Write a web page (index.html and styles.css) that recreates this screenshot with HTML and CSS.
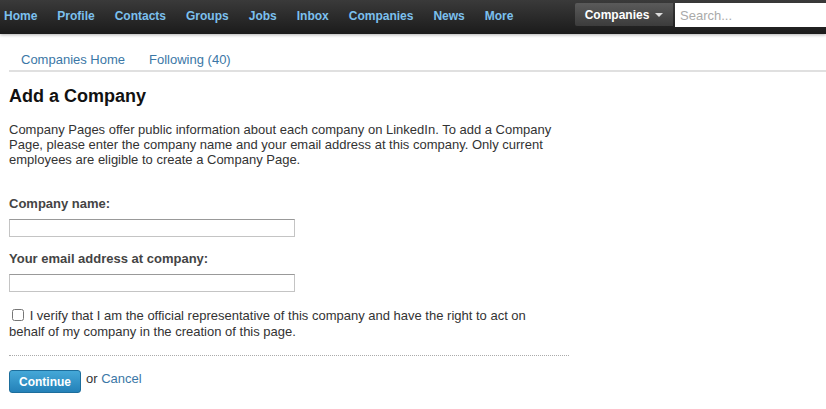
FILE: index.html
```html
<!DOCTYPE html>
<html lang="en">

<head>
    <meta charset="UTF-8">
    <meta name="viewport" content="width=device-width, initial-scale=1.0">
    <title>Add a Company</title>

    <link rel="stylesheet" href="styles.css">
</head>

<body>

    <div id="topbar">
        <div class="navLinks">
            <a href="#">Home</a>
            <a href="#">Profile</a>
            <a href="#">Contacts</a>
            <a href="#">Groups</a>
            <a href="#">Jobs</a>
            <a href="#">Inbox</a>
            <a href="#">Companies</a>
            <a href="#">News</a>
            <a href="#">More</a>
        </div>
        <div class="searchArea">
            <div class="searchType">Companies <span class="caret"></span></div>
            <input class="searchBox" type="text" placeholder="Search...">
        </div>
    </div>

    <div id="subnav">
        <a href="#">Companies Home</a>
        <a href="#">Following (40)</a>
    </div>

    <div id="content">
        <h1>Add a Company</h1>
        <p class="intro">Company Pages offer public information about each company on LinkedIn. To add a Company
            Page, please enter the company name and your email address at this company. Only current
            employees are eligible to create a Company Page.</p>

        <label class="fieldLabel" for="companyName">Company name:</label>
        <input class="field" id="companyName" type="text">

        <label class="fieldLabel second" for="companyEmail">Your email address at company:</label>
        <input class="field" id="companyEmail" type="text">

        <div class="verify">
            <input type="checkbox" id="verify"> <label for="verify">I verify that I am the official representative of this company and have the right to act on<br>
            behalf of my company in the creation of this page.</label>
        </div>

        <div class="actions">
            <button class="continueBtn">Continue</button>
            <span class="or">or <a href="#">Cancel</a></span>
        </div>
    </div>

</body>

</html>
```

FILE: styles.css
```css
body {
    margin: 0;
    font-family: "Liberation Sans", Arial, sans-serif;
    color: #333;
    background: #fff;
}

a {
    text-decoration: none;
}

/* barra superior */
#topbar {
    display: flex;
    justify-content: space-between;
    height: 34px;
    background: linear-gradient(#3a3a3a, #1b1b1b);
    box-shadow: 0 1px 3px rgba(0, 0, 0, 0.3);
}

.navLinks {
    display: flex;
    align-items: center;
    padding-bottom: 2px;
}

.navLinks a {
    padding: 0 10px;
    font-size: 12px;
    font-weight: bold;
    color: #7cc0ee;
}

.navLinks a:first-child {
    padding-left: 4px;
}

.searchArea {
    display: flex;
    align-items: flex-start;
    padding-top: 3px;
}

.searchType {
    display: flex;
    align-items: center;
    justify-content: center;
    gap: 6px;
    width: 98px;
    height: 23px;
    margin-right: 2px;
    background: linear-gradient(#5a5a5a, #3c3c3c);
    border-radius: 2px 0 0 2px;
    color: #fff;
    font-size: 12px;
    font-weight: bold;
}

.caret {
    width: 0;
    height: 0;
    border-left: 4px solid transparent;
    border-right: 4px solid transparent;
    border-top: 4px solid #ddd;
    margin-top: 1px;
}

.searchBox {
    width: 151px;
    height: 24px;
    box-sizing: border-box;
    border: 0;
    padding: 0 5px;
    font-family: "Liberation Sans", Arial, sans-serif;
    font-size: 13px;
}

.searchBox::placeholder {
    color: #aaa;
}

/* sub menu */
#subnav {
    display: flex;
    gap: 24px;
    margin-left: 9px;
    padding: 18px 0 3px 12px;
    border-bottom: 2px solid #e0e0e0;
}

#subnav a {
    font-size: 13px;
    line-height: 15px;
    color: #3b77a6;
}

#content {
    width: 560px;
    padding-left: 9px;
}

h1 {
    margin: 13px 0 0;
    font-size: 18px;
    line-height: 22px;
    color: #111;
}

.intro {
    margin: 15px 0 0;
    font-size: 13px;
    line-height: 15px;
}

.fieldLabel {
    display: block;
    margin-top: 29px;
    font-size: 13px;
    line-height: 16px;
    font-weight: bold;
    color: #444;
}

.fieldLabel.second {
    margin-top: 14px;
}

.field {
    display: block;
    width: 286px;
    height: 18px;
    box-sizing: border-box;
    margin-top: 7px;
    border: 1px solid #c4c4c4;
    border-top-color: #999;
}

.verify {
    margin-top: 16px;
    font-size: 13px;
    line-height: 16px;
    padding-bottom: 15px;
    border-bottom: 1px dotted #aaa;
}

.verify input {
    margin: 0 2px 0 3px;
    width: 12px;
    height: 12px;
    vertical-align: -1px;
}

.actions {
    display: flex;
    align-items: flex-start;
    gap: 5px;
    margin-top: 14px;
}

.continueBtn {
    width: 72px;
    height: 23px;
    border: 1px solid #1d6e9c;
    border-radius: 3px;
    background: linear-gradient(#45a8d8, #2481b8);
    color: #fff;
    font-family: "Liberation Sans", Arial, sans-serif;
    font-size: 12px;
    font-weight: bold;
    cursor: pointer;
}

.or {
    font-size: 13px;
    line-height: 16px;
    margin-top: 1px;
}

.or a {
    color: #3b77a6;
}
```
